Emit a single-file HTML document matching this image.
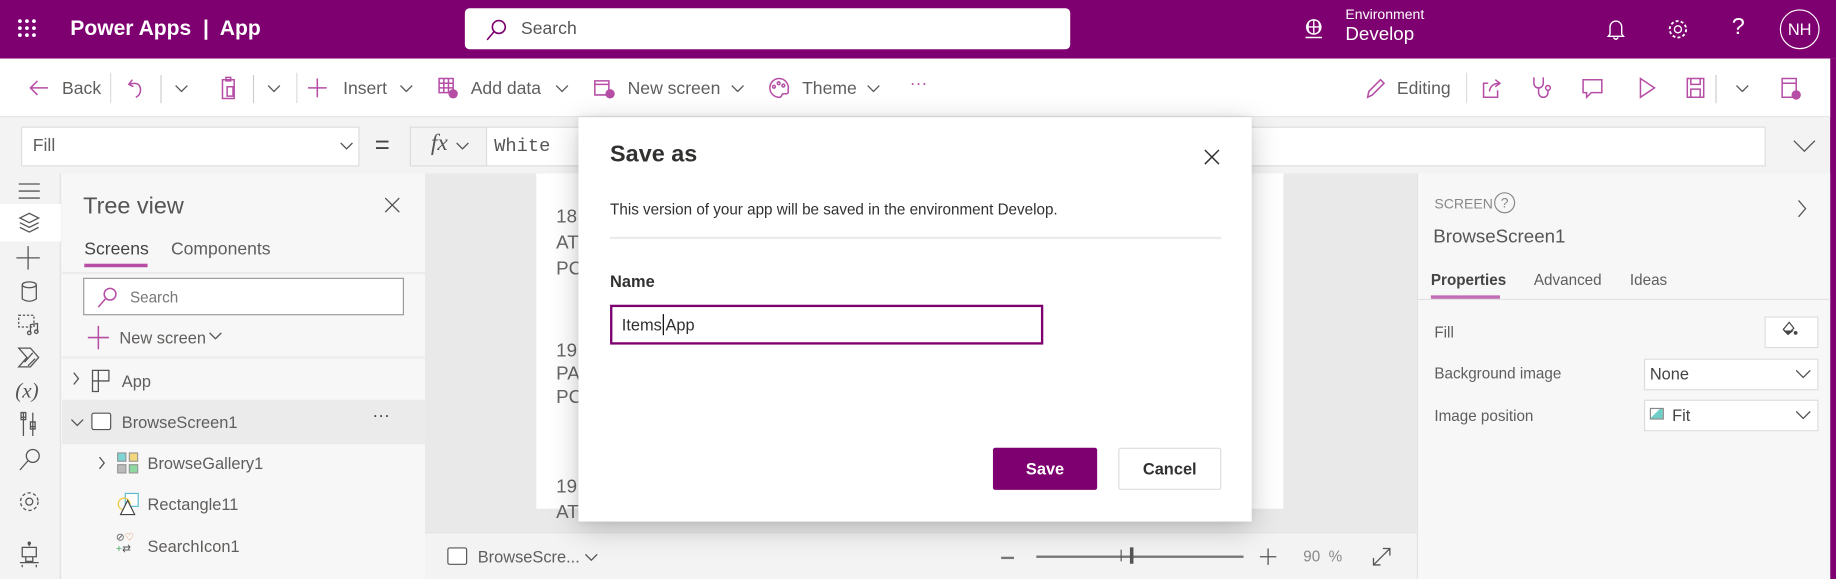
<!DOCTYPE html>
<html><head><meta charset="utf-8"><style>
*{box-sizing:border-box;margin:0;padding:0}
html,body{width:1836px;height:579px;overflow:hidden;background:#f3f3f3;font-family:"Liberation Sans",sans-serif}
#w{position:absolute;left:0;top:0;width:1568px;height:494px;transform:scale(1.17092,1.17206);transform-origin:0 0;background:#f3f3f3;overflow:hidden}
.a{position:absolute}
.t{position:absolute;white-space:nowrap;color:#605e5c}
svg{position:absolute;overflow:visible}
.ic{fill:none;stroke:#b64ea6;stroke-width:1.3}
.ig{fill:none;stroke:#555;stroke-width:1.1}
</style></head><body><div id="w">
<!-- header -->
<div class="a" style="left:0;top:0;width:1568px;height:50px;background:#7e0070"></div>
<svg style="left:15px;top:16px" width="18" height="18"><g fill="#fff"><circle cx="2" cy="2" r="1.6"/><circle cx="8" cy="2" r="1.6"/><circle cx="14" cy="2" r="1.6"/><circle cx="2" cy="8" r="1.6"/><circle cx="8" cy="8" r="1.6"/><circle cx="14" cy="8" r="1.6"/><circle cx="2" cy="14" r="1.6"/><circle cx="8" cy="14" r="1.6"/><circle cx="14" cy="14" r="1.6"/></g></svg>
<div class="t" style="left:60px;top:14px;font-size:18px;color:#fff;font-weight:600">Power Apps&nbsp; |&nbsp; App</div>
<div class="a" style="left:397px;top:7px;width:517px;height:35px;background:#fff;border-radius:4px"></div>
<svg style="left:414px;top:16px" width="20" height="20"><circle cx="12" cy="7" r="5.5" fill="none" stroke="#7e0070" stroke-width="1.4"/><path d="M8 11 L2 18" stroke="#7e0070" stroke-width="1.4"/></svg>
<div class="t" style="left:445px;top:16px;font-size:15px;color:#555">Search</div>
<svg style="left:1113px;top:16px" width="18" height="18"><circle cx="9" cy="7" r="6" fill="none" stroke="#fff" stroke-width="1.3"/><path d="M3 7h12M9 1v12M5 2q-2 5 0 10M13 2q2 5 0 10M2 16h14" stroke="#fff" stroke-width="1.2" fill="none"/></svg>
<div class="t" style="left:1149px;top:5px;font-size:12px;color:#fff">Environment</div>
<div class="t" style="left:1149px;top:21px;font-size:16px;color:#fff">Develop</div>
<svg style="left:1372px;top:15px" width="16" height="20"><path d="M3 14V8a5 5 0 0 1 10 0v6l1.5 2h-13z M6 17q2 3 4 0" fill="none" stroke="#fff" stroke-width="1.2"/></svg>
<svg style="left:1424px;top:16px" width="18" height="18"><circle cx="9" cy="9" r="3" fill="none" stroke="#fff" stroke-width="1.2"/><circle cx="9" cy="9" r="7" fill="none" stroke="#fff" stroke-width="1.6" stroke-dasharray="2.5 1.9"/></svg>
<div class="t" style="left:1479px;top:12px;font-size:20px;color:#fff">?</div>
<div class="a" style="left:1520px;top:8px;width:34px;height:34px;border:1.3px solid #fff;border-radius:50%;color:#fff;font-size:14px;text-align:center;line-height:32px">NH</div>
<div class="a" style="left:1563px;top:50px;width:5px;height:444px;background:#7e0070"></div>
<!-- toolbar -->
<div class="a" style="left:0;top:50px;width:1563px;height:50px;background:#fff;border-bottom:1px solid #e6e6e6"></div>
<svg style="left:24px;top:67px" width="18" height="16"><path d="M17 8H2M8 2L2 8l6 6" class="ic"/></svg>
<div class="t" style="left:53px;top:67px;font-size:15px">Back</div>
<div class="a" style="left:94px;top:62px;width:1px;height:26px;background:#ddd"></div>
<svg style="left:108px;top:66px" width="16" height="18"><path d="M5 2L2 6l4 2M2 6q10-3 10 5q0 4-4 6" class="ic"/></svg>
<div class="a" style="left:137px;top:64px;width:1px;height:24px;background:#ccc"></div>
<svg style="left:149px;top:72px" width="12" height="7"><path d="M1 1l5 5 5-5" class="ig"/></svg>
<svg style="left:187px;top:65px" width="16" height="20"><path d="M3 3h10v16H3zM6 1h4v3H6zM7 9h5v8H7z" class="ic"/></svg>
<div class="a" style="left:216px;top:64px;width:1px;height:24px;background:#ccc"></div>
<svg style="left:228px;top:72px" width="12" height="7"><path d="M1 1l5 5 5-5" class="ig"/></svg>
<div class="a" style="left:253px;top:62px;width:1px;height:26px;background:#ddd"></div>
<svg style="left:263px;top:67px" width="16" height="16"><path d="M8 0v16M0 8h16" class="ic"/></svg>
<div class="t" style="left:293px;top:67px;font-size:15px">Insert</div>
<svg style="left:341px;top:72px" width="12" height="7"><path d="M1 1l5 5 5-5" class="ig"/></svg>
<svg style="left:374px;top:66px" width="18" height="20"><path d="M1 1h12v12H1zM1 5h12M1 9h12M5 1v12M9 1v12" class="ic"/><circle cx="13" cy="14" r="4" fill="#b64ea6"/></svg>
<div class="t" style="left:402px;top:67px;font-size:15px">Add data</div>
<svg style="left:474px;top:72px" width="12" height="7"><path d="M1 1l5 5 5-5" class="ig"/></svg>
<svg style="left:507px;top:67px" width="18" height="18"><path d="M1 2h12v12H1zM1 5h12" class="ic"/><circle cx="14" cy="13" r="4" fill="#b64ea6"/></svg>
<div class="t" style="left:536px;top:67px;font-size:15px">New screen</div>
<svg style="left:624px;top:72px" width="12" height="7"><path d="M1 1l5 5 5-5" class="ig"/></svg>
<svg style="left:656px;top:66px" width="18" height="18"><path d="M9 1a8 8 0 1 0 1 16c2 0 1-3 3-3h3a2 2 0 0 0 1-3A8 8 0 0 0 9 1z" class="ic"/><circle cx="5" cy="8" r="1.2" class="ic"/><circle cx="9" cy="5" r="1.2" class="ic"/><circle cx="13" cy="7" r="1.2" class="ic"/></svg>
<div class="t" style="left:685px;top:67px;font-size:15px">Theme</div>
<svg style="left:740px;top:72px" width="12" height="7"><path d="M1 1l5 5 5-5" class="ig"/></svg>
<div class="t" style="left:777px;top:63px;font-size:15px;color:#b64ea6">···</div>
<svg style="left:1166px;top:66px" width="18" height="18"><path d="M2 17l1-5L13 2l3 3L6 15z" class="ic"/></svg>
<div class="t" style="left:1193px;top:67px;font-size:15px">Editing</div>
<div class="a" style="left:1252px;top:62px;width:1px;height:26px;background:#ddd"></div>
<svg style="left:1265px;top:66px" width="18" height="18"><path d="M14 11v6H2V5h4M7 12q1-7 9-7M12 2l4 3-4 3" class="ic"/></svg>
<svg style="left:1308px;top:65px" width="18" height="20"><path d="M2 1v5a4 4 0 0 0 8 0V1M6 10v4a4 4 0 0 0 8 0v-2" class="ic"/><circle cx="14" cy="10" r="2" class="ic"/></svg>
<svg style="left:1351px;top:66px" width="18" height="18"><path d="M1 2h16v11H8l-4 4v-4H1z" class="ic"/></svg>
<svg style="left:1399px;top:66px" width="16" height="18"><path d="M2 1l12 8-12 8z" class="ic"/></svg>
<svg style="left:1440px;top:66px" width="16" height="18"><path d="M1 1h14v16H1zM4 1v5h8V1M4 17v-7h8v7" class="ic"/></svg>
<div class="a" style="left:1465px;top:64px;width:1px;height:24px;background:#ccc"></div>
<svg style="left:1482px;top:72px" width="12" height="7"><path d="M1 1l5 5 5-5" class="ig"/></svg>
<svg style="left:1520px;top:66px" width="18" height="20"><path d="M2 1h12v16H2zM2 5h12" class="ic"/><circle cx="14" cy="15" r="4" fill="#b64ea6"/></svg>
<!-- formula bar -->
<div class="a" style="left:18px;top:108px;width:289px;height:34px;background:#fff;border:1px solid #ddd"></div>
<div class="t" style="left:28px;top:116px;font-size:15px">Fill</div>
<svg style="left:290px;top:121px" width="12" height="7"><path d="M1 1l5 5 5-5" class="ig"/></svg>
<div class="t" style="left:320px;top:111px;font-size:22px;color:#444">=</div>
<div class="a" style="left:350px;top:108px;width:1158px;height:34px;background:#fff;border:1px solid #ddd"></div>
<div class="a" style="left:350px;top:108px;width:66px;height:34px;background:#f3f3f3;border:1px solid #ddd"></div>
<div class="t" style="left:368px;top:111px;font-size:20px;font-style:italic;font-family:'Liberation Serif',serif;color:#555">fx</div>
<svg style="left:389px;top:121px" width="12" height="7"><path d="M1 1l5 5 5-5" class="ig"/></svg>
<div class="t" style="left:422px;top:116px;font-size:16px;font-family:'Liberation Mono',monospace;color:#555">White</div>
<svg style="left:1531px;top:119px" width="20" height="11"><path d="M1 1l9 9 9-9" class="ig" stroke-width="1.4"/></svg>
<!-- left rail -->
<div class="a" style="left:0;top:148px;width:52px;height:346px;background:#f3f3f3;border-right:1px solid #e2e2e2"></div>
<div class="a" style="left:0;top:174px;width:52px;height:32px;background:#fff"></div>
<svg style="left:15px;top:156px" width="20" height="14"><path d="M1 1h18M1 7h18M1 13h18" class="ig"/></svg>
<svg style="left:15px;top:181px" width="20" height="20"><path d="M10 1l8 4-8 4-8-4zM2 9l8 4 8-4M2 13l8 4 8-4" class="ig"/></svg>
<svg style="left:14px;top:210px" width="20" height="20"><path d="M10 0v20M0 10h20" class="ig"/></svg>
<svg style="left:17px;top:240px" width="16" height="18"><ellipse cx="8" cy="3" rx="6" ry="2.5" class="ig"/><path d="M2 3v12q6 4 12 0V3" class="ig"/></svg>
<svg style="left:15px;top:268px" width="20" height="18"><path d="M1 1h13v10H1z" class="ig" stroke-dasharray="2 1.5"/><path d="M11 16V9l6-1v7" class="ig"/><circle cx="10" cy="16" r="1.5" class="ig"/><circle cx="16" cy="15" r="1.5" class="ig"/></svg>
<svg style="left:15px;top:296px" width="20" height="18"><path d="M1 1h10l7 8-7 8H1l7-8zM6 13l7-8M9 16l6-6" class="ig"/></svg>
<div class="t" style="left:13px;top:323px;font-size:18px;font-style:italic;font-family:'Liberation Serif',serif;color:#555">(x)</div>
<svg style="left:17px;top:351px" width="16" height="22"><path d="M3 1v20M11 1v20M1 5h4M9 13h4M1 1h4v6H1zM9 9h4v6H9z" class="ig"/></svg>
<svg style="left:16px;top:382px" width="20" height="20"><circle cx="12" cy="7" r="5.5" class="ig"/><path d="M8 11l-7 8" class="ig"/></svg>
<svg style="left:15px;top:418px" width="20" height="20"><circle cx="10" cy="10" r="3" class="ig"/><circle cx="10" cy="10" r="7.5" class="ig" stroke-width="1.8" stroke-dasharray="2.8 2"/></svg>
<svg style="left:16px;top:462px" width="18" height="22"><path d="M9 0v4M3 5h12v8H3zM6 13v4h6v-4M1 18h16M3 20v2M15 20v2" class="ig"/><circle cx="9" cy="1.5" r="1.5" fill="#555"/></svg>
<!-- tree panel -->
<div class="a" style="left:53px;top:148px;width:310px;height:346px;background:#f7f7f7"></div>
<div class="t" style="left:71px;top:165px;font-size:20px;color:#555">Tree view</div>
<svg style="left:328px;top:168px" width="14" height="14"><path d="M1 1l12 12M13 1L1 13" class="ig"/></svg>
<div class="t" style="left:72px;top:204px;font-size:15px;color:#444">Screens</div>
<div class="a" style="left:72px;top:225px;width:54px;height:3px;background:#b64ea6"></div>
<div class="t" style="left:146px;top:204px;font-size:15px">Components</div>
<div class="a" style="left:53px;top:232px;width:310px;height:2px;background:#ececec"></div>
<div class="a" style="left:71px;top:237px;width:274px;height:32px;background:#fff;border:1px solid #999"></div>
<svg style="left:82px;top:244px" width="20" height="20"><circle cx="12" cy="7" r="5" class="ic"/><path d="M8 11l-6 7" class="ic"/></svg>
<div class="t" style="left:111px;top:246px;font-size:13px;color:#777">Search</div>
<svg style="left:75px;top:278px" width="18" height="20"><path d="M9 0v20M0 10h18" class="ic"/></svg>
<div class="t" style="left:102px;top:280px;font-size:14px">New screen</div>
<svg style="left:178px;top:283px" width="12" height="7"><path d="M1 1l5 5 5-5" class="ig"/></svg>
<div class="a" style="left:53px;top:304px;width:310px;height:2px;background:#ececec"></div>
<svg style="left:62px;top:317px" width="6" height="12"><path d="M1 1l4 5-4 5" class="ig"/></svg>
<svg style="left:78px;top:315px" width="16" height="20"><path d="M1 1h14v9H1zM1 10v9h5V1M6 10h9" class="ig" stroke-width="1.2"/></svg>
<div class="t" style="left:104px;top:317px;font-size:14px">App</div>
<div class="a" style="left:53px;top:341px;width:310px;height:38px;background:#ebebeb"></div>
<svg style="left:60px;top:357px" width="12" height="7"><path d="M1 1l5 5 5-5" class="ig"/></svg>
<div class="a" style="left:78px;top:352px;width:17px;height:15px;border:1.3px solid #555;border-radius:2px;background:#fff"></div>
<div class="t" style="left:104px;top:352px;font-size:14px">BrowseScreen1</div>
<div class="t" style="left:318px;top:346px;font-size:15px;color:#444">···</div>
<svg style="left:84px;top:389px" width="6" height="12"><path d="M1 1l4 5-4 5" class="ig"/></svg>
<div class="a" style="left:100px;top:386px;width:8px;height:8px;background:#7fd4d4;border:1px solid #999"></div>
<div class="a" style="left:110px;top:386px;width:8px;height:8px;background:#f5d77d;border:1px solid #999"></div>
<div class="a" style="left:100px;top:396px;width:8px;height:8px;background:#bbb;border:1px solid #999"></div>
<div class="a" style="left:110px;top:396px;width:8px;height:8px;background:#8ed9a0;border:1px solid #999"></div>
<div class="t" style="left:126px;top:387px;font-size:14px">BrowseGallery1</div>
<svg style="left:100px;top:419px" width="20" height="22"><rect x="7" y="2" width="11" height="11" fill="#fff" stroke="#5bbcd0" stroke-width="1"/><circle cx="6" cy="11" r="5" fill="none" stroke="#f0c93c"/><path d="M9 8l6 12H3z" fill="#fff" stroke="#444"/></svg>
<div class="t" style="left:126px;top:422px;font-size:14px">Rectangle11</div>
<div class="t" style="left:99px;top:453px;font-size:9px;color:#555;line-height:10px">⊘<span style="color:#e56a3d">♡</span><br><span style="color:#3aaa52">+</span>⇄</div>
<div class="t" style="left:126px;top:458px;font-size:14px">SearchIcon1</div>
<!-- canvas -->
<div class="a" style="left:363px;top:148px;width:847px;height:306px;background:#e9e9e9"></div>
<div class="a" style="left:458px;top:148px;width:638px;height:286px;background:#fff"></div>
<div class="t" style="left:475px;top:175px;font-size:16px;color:#666;line-height:22px">18<br>AT<br>PC</div>
<div class="t" style="left:475px;top:290px;font-size:16px;color:#666;line-height:20px">19<br>PA<br>PC</div>
<div class="t" style="left:475px;top:405px;font-size:16px;color:#666;line-height:22px">19<br>AT</div>
<div class="a" style="left:363px;top:454px;width:847px;height:40px;background:#f3f3f3;border-top:1px solid #e2e2e2"></div>
<div class="a" style="left:382px;top:467px;width:17px;height:15px;border:1.3px solid #555;border-radius:2px;background:#fff"></div>
<div class="t" style="left:408px;top:467px;font-size:14px">BrowseScre...</div>
<svg style="left:499px;top:472px" width="12" height="7"><path d="M1 1l5 5 5-5" class="ig"/></svg>
<div class="a" style="left:855px;top:475px;width:11px;height:1.5px;background:#777"></div>
<div class="a" style="left:885px;top:474px;width:177px;height:2px;background:#777"></div>
<div class="a" style="left:965px;top:467px;width:3px;height:14px;background:#555"></div>
<div class="a" style="left:957px;top:469px;width:1px;height:10px;background:#555"></div>
<svg style="left:1076px;top:468px" width="14" height="14"><path d="M7 0v14M0 7h14" class="ig"/></svg>
<div class="t" style="left:1113px;top:467px;font-size:13px;color:#888">90 &nbsp;%</div>
<svg style="left:1171px;top:466px" width="18" height="18"><path d="M2 16L16 2M10 2h6v6M2 10v6h6" class="ig"/></svg>
<!-- right panel -->
<div class="a" style="left:1210px;top:148px;width:353px;height:346px;background:#f7f7f7;border-left:1px solid #e2e2e2"></div>
<div class="t" style="left:1225px;top:167px;font-size:12px;color:#888">SCREEN</div>
<div class="a" style="left:1276px;top:164px;width:18px;height:18px;border:1.2px solid #888;border-radius:50%;font-size:12px;color:#888;text-align:center;line-height:16px">?</div>
<svg style="left:1535px;top:170px" width="8" height="16"><path d="M1 1l6 7-6 7" class="ig"/></svg>
<div class="t" style="left:1224px;top:194px;font-size:16px;color:#555">BrowseScreen1</div>
<div class="t" style="left:1222px;top:231px;font-size:13px;color:#444;font-weight:bold">Properties</div>
<div class="a" style="left:1222px;top:252px;width:59px;height:3px;background:#c06bb5"></div>
<div class="t" style="left:1310px;top:231px;font-size:13px">Advanced</div>
<div class="t" style="left:1392px;top:231px;font-size:13px">Ideas</div>
<div class="a" style="left:1210px;top:255px;width:353px;height:1px;background:#e2e2e2"></div>
<div class="t" style="left:1225px;top:276px;font-size:13px">Fill</div>
<div class="a" style="left:1507px;top:270px;width:46px;height:27px;background:#fff;border:1px solid #ddd"></div>
<svg style="left:1522px;top:274px" width="14" height="16"><path d="M6 1l-5 6 4 4 5-5z" fill="none" stroke="#444"/><path d="M1 8h9l-5 4z" fill="#444"/><circle cx="11.5" cy="10" r="1.6" fill="#444"/></svg>
<div class="t" style="left:1225px;top:311px;font-size:13px">Background image</div>
<div class="a" style="left:1404px;top:306px;width:149px;height:27px;background:#fff;border:1px solid #ddd"></div>
<div class="t" style="left:1409px;top:311px;font-size:14px;color:#444">None</div>
<svg style="left:1533px;top:315px" width="14" height="8"><path d="M1 1l6 6 6-6" class="ig"/></svg>
<div class="t" style="left:1225px;top:347px;font-size:13px">Image position</div>
<div class="a" style="left:1404px;top:341px;width:149px;height:27px;background:#fff;border:1px solid #ddd"></div>
<div class="a" style="left:1409px;top:348px;width:12px;height:10px;border:1px solid #888;background:linear-gradient(135deg,#fff 40%,#6fcfc8 41%)"></div>
<div class="t" style="left:1428px;top:346px;font-size:14px;color:#444">Fit</div>
<svg style="left:1533px;top:350px" width="14" height="8"><path d="M1 1l6 6 6-6" class="ig"/></svg>
<!-- dialog -->
<div class="a" style="left:494px;top:100px;width:575px;height:345px;background:#fff;box-shadow:0 6px 24px rgba(0,0,0,.22),0 0 6px rgba(0,0,0,.08)"></div>
<div class="t" style="left:521px;top:121px;font-size:20px;color:#323130;font-weight:600">Save as</div>
<svg style="left:1028px;top:127px" width="14" height="14"><path d="M1 1l12 12M13 1L1 13" fill="none" stroke="#333" stroke-width="1.3"/></svg>
<div class="t" style="left:521px;top:171px;font-size:13px;color:#323130">This version of your app will be saved in the environment Develop.</div>
<div class="a" style="left:521px;top:202px;width:522px;height:2px;background:#ebebeb"></div>
<div class="t" style="left:521px;top:232px;font-size:14px;color:#323130;font-weight:bold">Name</div>
<div class="a" style="left:521px;top:260px;width:370px;height:34px;border:2px solid #7e0070;background:#fff"></div>
<div class="t" style="left:531px;top:269px;font-size:14px;color:#323130">Items App</div>
<div class="a" style="left:566px;top:268px;width:1px;height:18px;background:#000"></div>
<div class="a" style="left:848px;top:382px;width:89px;height:36px;background:#7e0070;border-radius:2px;color:#fff;font-size:14px;font-weight:600;text-align:center;line-height:36px">Save</div>
<div class="a" style="left:955px;top:382px;width:88px;height:36px;background:#fff;border:1px solid #ddd;border-radius:2px;color:#323130;font-size:14px;font-weight:600;text-align:center;line-height:34px">Cancel</div>
</div></body></html>
